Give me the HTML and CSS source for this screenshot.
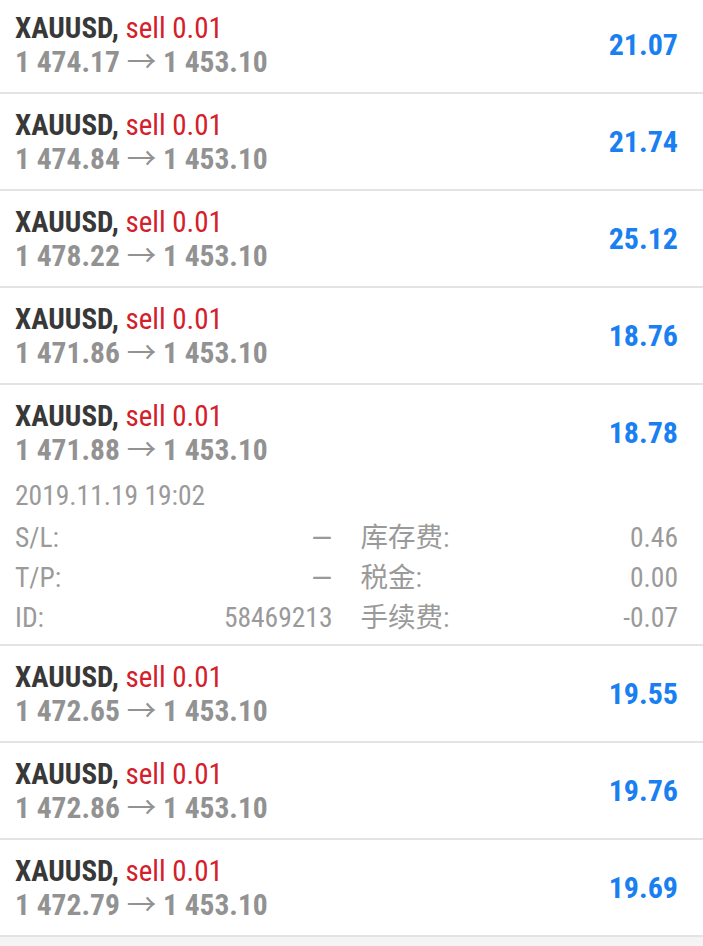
FILE: index.html
```html
<!DOCTYPE html>
<html lang="zh">
<head>
    <meta charset="UTF-8">
    <meta name="viewport" content="width=device-width, initial-scale=1.0">
    <title>Positions</title>
    <link rel="stylesheet" href="styles.css">
</head>
<body>
    <div class="list">
        <div class="row first">
            <div class="info">
                <div class="title"><b>XAUUSD,</b> <span class="sell">sell 0.01</span></div>
                <div class="prices">1 474.17 <span class="arrow">→</span> 1 453.10</div>
            </div>
            <div class="profit">21.07</div>
        </div>

        <div class="row">
            <div class="info">
                <div class="title"><b>XAUUSD,</b> <span class="sell">sell 0.01</span></div>
                <div class="prices">1 474.84 <span class="arrow">→</span> 1 453.10</div>
            </div>
            <div class="profit">21.74</div>
        </div>

        <div class="row">
            <div class="info">
                <div class="title"><b>XAUUSD,</b> <span class="sell">sell 0.01</span></div>
                <div class="prices">1 478.22 <span class="arrow">→</span> 1 453.10</div>
            </div>
            <div class="profit">25.12</div>
        </div>

        <div class="row">
            <div class="info">
                <div class="title"><b>XAUUSD,</b> <span class="sell">sell 0.01</span></div>
                <div class="prices">1 471.86 <span class="arrow">→</span> 1 453.10</div>
            </div>
            <div class="profit">18.76</div>
        </div>

        <div class="row open">
            <div class="summary">
                <div class="info">
                    <div class="title"><b>XAUUSD,</b> <span class="sell">sell 0.01</span></div>
                    <div class="prices">1 471.88 <span class="arrow">→</span> 1 453.10</div>
                </div>
                <div class="profit">18.78</div>
            </div>
            <div class="details">
                <div class="time">2019.11.19 19:02</div>
                <div class="grid">
                    <div class="cell"><span>S/L:</span><span class="dash">—</span></div>
                    <div class="cell"><span>库存费:</span><span>0.46</span></div>
                    <div class="cell"><span>T/P:</span><span class="dash">—</span></div>
                    <div class="cell"><span>税金:</span><span>0.00</span></div>
                    <div class="cell"><span>ID:</span><span>58469213</span></div>
                    <div class="cell"><span>手续费:</span><span>-0.07</span></div>
                </div>
            </div>
        </div>

        <div class="row">
            <div class="info">
                <div class="title"><b>XAUUSD,</b> <span class="sell">sell 0.01</span></div>
                <div class="prices">1 472.65 <span class="arrow">→</span> 1 453.10</div>
            </div>
            <div class="profit">19.55</div>
        </div>

        <div class="row">
            <div class="info">
                <div class="title"><b>XAUUSD,</b> <span class="sell">sell 0.01</span></div>
                <div class="prices">1 472.86 <span class="arrow">→</span> 1 453.10</div>
            </div>
            <div class="profit">19.76</div>
        </div>

        <div class="row">
            <div class="info">
                <div class="title"><b>XAUUSD,</b> <span class="sell">sell 0.01</span></div>
                <div class="prices">1 472.79 <span class="arrow">→</span> 1 453.10</div>
            </div>
            <div class="profit">19.69</div>
        </div>
    </div>
</body>
</html>
```

FILE: styles.css
```css
* {
    margin: 0;
    padding: 0;
    box-sizing: border-box;
}

body {
    font-family: "Roboto Condensed", Roboto, "Noto Sans CJK SC", sans-serif;
    background: #f4f4f4;
    color: #383838;
    overflow: hidden;
}

.list {
    background: white;
    margin-top: -3px;
}

.row {
    display: flex;
    align-items: center;
    justify-content: space-between;
    padding: 16px 25px 10px 15px;
    border-bottom: 2px solid #e3e3e3;
}

.row.open {
    display: block;
    padding-bottom: 6px;
}

.summary {
    display: flex;
    align-items: center;
    justify-content: space-between;
}

.title {
    font-size: 29px;
    line-height: 30px;
    color: #383838;
}

.title b {
    font-weight: 700;
}

.sell {
    color: #d3202a;
}

.prices {
    font-size: 29.5px;
    line-height: 39px;
    font-weight: 700;
    color: #929292;
}

.arrow {
    font-weight: 400;
}

.profit {
    font-size: 30px;
    font-weight: 700;
    color: #1a7ff0;
    margin-top: -6px;
}

.details {
    color: #9a9a9a;
    font-size: 27.5px;
}

.time {
    line-height: 40px;
    margin-top: 6px;
}

.grid {
    display: grid;
    grid-template-columns: 1fr 1fr;
    column-gap: 28px;
    line-height: 40px;
    margin-top: 2px;
}

.cell {
    display: flex;
    justify-content: space-between;
}

.dash {
    font-size: 32px;
}
```
